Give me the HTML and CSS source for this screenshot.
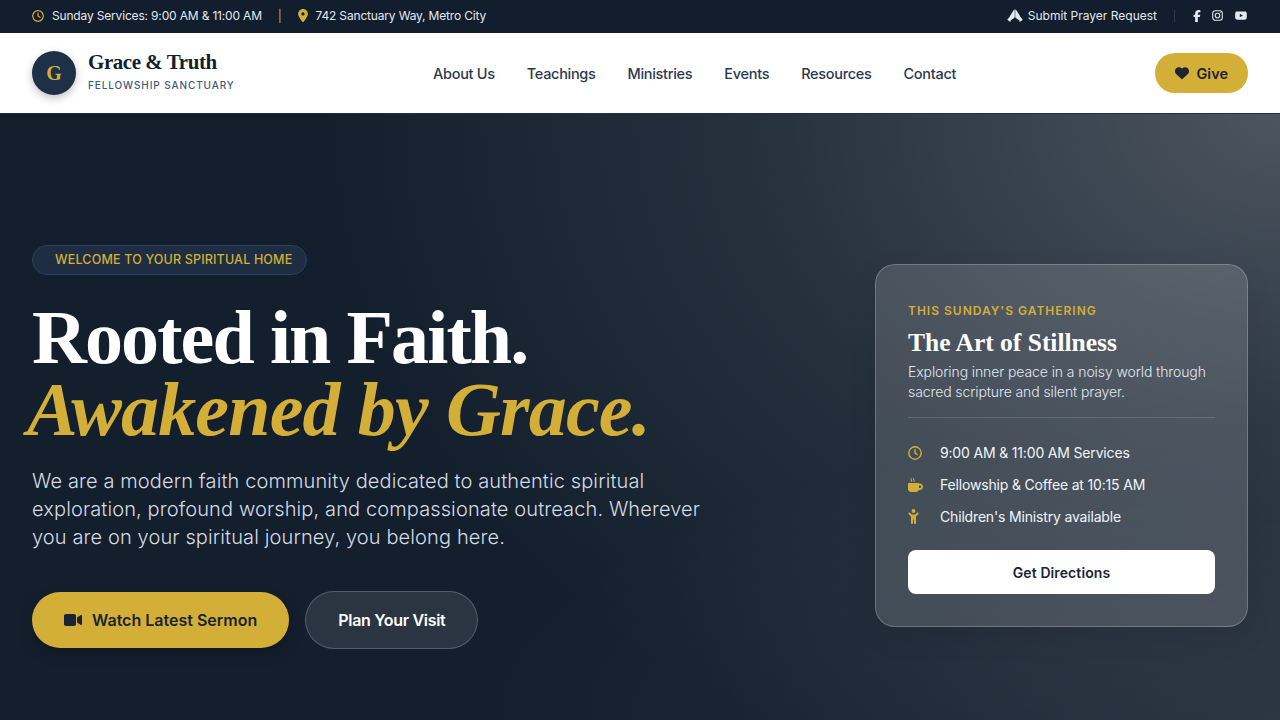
FILE: index.html
```html
<!DOCTYPE html>
<html>
<head>
  <meta charset="UTF-8">
  <title>Grace &amp; Truth Fellowship Sanctuary</title>
  <link rel="stylesheet" href="styles.css">
</head>
<body>
  <div class="topbar">
    <div class="topbar-group">
      <span class="topbar-item">
        <svg class="icon-gold" width="12" height="12" viewBox="0 0 24 24" fill="none" stroke="currentColor" stroke-width="2.4" stroke-linecap="round"><circle cx="12" cy="12" r="10.6"/><path d="M12 6v6l4 2.6"/></svg>
        Sunday Services: 9:00 AM &amp; 11:00 AM
      </span>
      <span class="topbar-sep">|</span>
      <span class="topbar-item">
        <svg class="icon-gold" width="10" height="13" viewBox="0 0 384 512" fill="currentColor"><path d="M215.7 499.2C267 435 384 279.4 384 192C384 86 298 0 192 0S0 86 0 192c0 87.4 117 243 168.3 307.2c12.3 15.3 35.1 15.3 47.4 0zM192 128a64 64 0 1 1 0 128 64 64 0 1 1 0-128z"/></svg>
        742 Sanctuary Way, Metro City
      </span>
    </div>
    <div class="topbar-group topbar-right">
      <a class="topbar-item prayer" href="#">
        <svg width="16" height="13" viewBox="0 0 32 26" fill="currentColor"><path d="M15.5 1c-1 0-2 .8-2.600 2L6.500 13c-.5 1-1.300 2.600-2 3.500L.5 21.500 6.500 26l1-3.500L13 19c1.600-1 2.500-2 2.500-4z"/><path d="M16.500 1c1 0 2 .8 2.600 2l6.400 10c.5 1 1.300 2.600 2 3.500l4 5-6 4.500-1-3.500L19 19c-1.600-1-2.500-2-2.500-4z"/></svg>
        Submit Prayer Request
      </a>
      <span class="topbar-divider"></span>
      <span class="social">
        <svg width="8" height="12" viewBox="0 0 320 512" fill="currentColor"><path d="M80 299.3V512H196V299.3h86.5l18-97.8H196V166.9c0-51.7 20.3-71.5 72.7-71.5c16.3 0 29.4 .4 37 1.2V7.9C291.4 4 256.4 0 236.2 0C129.3 0 80 50.5 80 159.4v42.1H14v97.8H80z"/></svg>
        <svg width="11" height="11" viewBox="0 0 24 24" fill="none" stroke="currentColor" stroke-width="2.3"><rect x="1.5" y="1.5" width="21" height="21" rx="6"/><circle cx="12" cy="12" r="5"/><circle cx="18" cy="6" r="1.2" fill="currentColor" stroke="none"/></svg>
        <svg width="14" height="11" viewBox="0 0 576 512" fill="currentColor"><path d="M549.655 124.083c-6.281-23.65-24.787-42.276-48.284-48.597C458.781 64 288 64 288 64S117.22 64 74.629 75.486c-23.497 6.322-42.003 24.947-48.284 48.597-11.412 42.867-11.412 132.305-11.412 132.305s0 89.438 11.412 132.305c6.281 23.65 24.787 41.5 48.284 47.821C117.22 448 288 448 288 448s170.78 0 213.371-11.486c23.497-6.321 42.003-24.171 48.284-47.821 11.412-42.867 11.412-132.305 11.412-132.305s0-89.438-11.412-132.305zm-317.51 213.508V175.185l142.739 81.205-142.739 81.201z"/></svg>
      </span>
    </div>
  </div>

  <header class="header">
    <a class="brand" href="#">
      <span class="brand-mark">G</span>
      <span class="brand-text">
        <span class="brand-name">Grace &amp; Truth</span>
        <span class="brand-sub">FELLOWSHIP SANCTUARY</span>
      </span>
    </a>
    <nav class="nav">
      <a href="#">About Us</a>
      <a href="#">Teachings</a>
      <a href="#">Ministries</a>
      <a href="#">Events</a>
      <a href="#">Resources</a>
      <a href="#">Contact</a>
    </nav>
    <a class="give-btn" href="#">
      <svg width="14" height="14" viewBox="0 0 512 512" fill="currentColor"><path d="M47.6 300.4L228.3 469.1c7.5 7 17.4 10.9 27.7 10.9s20.2-3.9 27.7-10.9L464.4 300.4c30.4-28.3 47.6-68 47.6-109.5v-5.8c0-69.9-50.5-129.5-119.4-141C347 36.5 300.6 51.4 268 84L256 96 244 84c-32.6-32.6-79-47.5-124.6-39.9C50.5 55.6 0 115.2 0 185.1v5.8c0 41.5 17.2 81.2 47.6 109.5z"/></svg>
      Give
    </a>
  </header>

  <main class="hero">
    <section class="hero-copy">
      <div class="badge">WELCOME TO YOUR SPIRITUAL HOME</div>
      <h1 class="hero-title">Rooted in Faith.<em>Awakened by Grace.</em></h1>
      <p class="hero-text">We are a modern faith community dedicated to authentic spiritual exploration, profound worship, and compassionate outreach. Wherever you are on your spiritual journey, you belong here.</p>
      <div class="hero-actions">
        <a class="btn btn-gold" href="#">
          <svg width="18" height="16" viewBox="0 0 576 512" fill="currentColor"><path d="M0 128C0 92.7 28.7 64 64 64H320c35.3 0 64 28.7 64 64V384c0 35.3-28.7 64-64 64H64c-35.3 0-64-28.7-64-64V128zM559.1 99.8c10.4 5.6 16.9 16.4 16.9 28.2V384c0 11.8-6.5 22.6-16.9 28.2s-23 5-32.9-1.6l-96-64L416 337.1V320 192 174.9l14.2-9.5 96-64c9.8-6.5 22.4-7.2 32.9-1.6z"/></svg>
          Watch Latest Sermon
        </a>
        <a class="btn btn-ghost" href="#">Plan Your Visit</a>
      </div>
    </section>

    <aside class="card">
      <div class="card-label">THIS SUNDAY'S GATHERING</div>
      <h2 class="card-title">The Art of Stillness</h2>
      <p class="card-text">Exploring inner peace in a noisy world through sacred scripture and silent prayer.</p>
      <ul class="card-list">
        <li>
          <span class="card-icon"><svg width="14" height="14" viewBox="0 0 24 24" fill="none" stroke="currentColor" stroke-width="2.4" stroke-linecap="round"><circle cx="12" cy="12" r="10.6"/><path d="M12 6v6l4 2.6"/></svg></span>
          9:00 AM &amp; 11:00 AM Services
        </li>
        <li>
          <span class="card-icon"><svg width="15" height="14" viewBox="0 0 30 28" fill="currentColor"><path fill-rule="evenodd" d="M0 10h22v1h2c3.300 0 6 2.800 6 6.500S27.300 24 24 24h-2.300c-.9 2.400-3 4-5.700 4H6c-3.300 0-6-2.700-6-6V10zm22 5v5h2c1.300 0 2.300-1.100 2.300-2.500S25.300 15 24 15h-2z"/><path d="M6 1l1.500 6M11 1l1.500 6" stroke="currentColor" stroke-width="2" stroke-linecap="round"/></svg></span>
          Fellowship &amp; Coffee at 10:15 AM
        </li>
        <li>
          <span class="card-icon"><svg width="11" height="15" viewBox="0 0 22 30" fill="currentColor"><circle cx="11" cy="4" r="3.8"/><path d="M1.500 7.500c.8-.8 2-.8 2.800 0L7.500 11h7l3.200-3.500c.8-.8 2-.8 2.800 0s.8 2 0 2.800L16 15v13c0 1.100-.9 2-2 2s-2-.9-2-2v-7h-2v7c0 1.100-.9 2-2 2s-2-.9-2-2V15l-4.500-4.700c-.8-.8-.8-2 0-2.800z"/></svg></span>
          Children's Ministry available
        </li>
      </ul>
      <a class="card-btn" href="#">Get Directions</a>
    </aside>
  </main>
</body>
</html>
```

FILE: styles.css
```css
* {
  box-sizing: border-box;
}

body {
  margin: 0;
  font-family: Inter, "Noto Sans", sans-serif;
  color: #1a2433;
  background: #131f2d;
  overflow: hidden;
}

a {
  color: inherit;
  text-decoration: none;
}

/* top bar */
.topbar {
  display: flex;
  align-items: center;
  justify-content: space-between;
  height: 33px;
  padding: 0 32px 2px;
  background: #121e2d;
  color: #e2e8f0;
  font-size: 12px;
  letter-spacing: -0.17px;
}

.topbar-group {
  display: flex;
  align-items: center;
  gap: 16px;
}

.topbar-item {
  display: flex;
  align-items: center;
  gap: 8px;
}

.topbar-sep {
  color: #c4ccd6;
  font-weight: 300;
}

.topbar-right {
  gap: 17px;
}

.prayer {
  gap: 5px;
  letter-spacing: 0;
}

.topbar-divider {
  width: 1px;
  height: 12px;
  background: #2a3a50;
}

.social {
  display: flex;
  align-items: center;
  gap: 11px;
  margin-left: 1px;
}

.icon-gold {
  color: #d4af37;
}

/* header */
.header {
  display: flex;
  align-items: center;
  justify-content: space-between;
  height: 81px;
  padding: 0 32px;
  background: #fff;
  border-bottom: 1px solid #1e3048;
}

.brand {
  display: flex;
  align-items: center;
  gap: 12px;
}

.brand-mark {
  display: flex;
  align-items: center;
  justify-content: center;
  width: 44px;
  height: 44px;
  border-radius: 50%;
  background: #1e3048;
  color: #d4af37;
  font-family: "Liberation Serif", serif;
  font-size: 20px;
  font-weight: 700;
  box-shadow: 0 3px 8px rgba(0,0,0,0.25);
}

.brand-text {
  display: flex;
  flex-direction: column;
  padding-bottom: 5px;
}

.brand-name {
  font-family: "Liberation Serif", serif;
  font-size: 21px;
  line-height: 26px;
  font-weight: 700;
  color: #131f2d;
  letter-spacing: -0.45px;
}

.brand-sub {
  margin-top: 4px;
  font-size: 10px;
  line-height: 13px;
  font-weight: 500;
  color: #3f5a80;
  letter-spacing: 0.9px;
}

.nav {
  display: flex;
  gap: 32px;
  font-size: 14.5px;
  font-weight: 450;
  color: #2a3a50;
  letter-spacing: -0.3px;
}

.give-btn {
  display: flex;
  align-items: center;
  gap: 8px;
  height: 40px;
  padding: 0 20px;
  border-radius: 20px;
  background: #d4af37;
  font-size: 14.5px;
  font-weight: 600;
}

/* hero */
.hero {
  display: flex;
  align-items: center;
  justify-content: space-between;
  height: 606px;
  padding: 60px 32px 0;
  background:
    radial-gradient(ellipse 90% 70% at 100% 100%, rgba(255,255,255,0.08), transparent 70%),
    radial-gradient(ellipse 75% 120% at 100% 0, rgba(255,255,255,0.24), rgba(255,255,255,0.08) 55%, transparent 100%),
    #131f2d;
}

.hero-copy {
  width: 680px;
}

.badge {
  display: flex;
  align-items: center;
  width: 275px;
  height: 30px;
  padding: 0 0 1px 22px;
  border: 1px solid #2d405c;
  border-radius: 15px;
  background: #1e2d42;
  color: #d4af37;
  font-size: 12.5px;
  font-weight: 500;
  letter-spacing: 0.17px;
  white-space: nowrap;
}

.hero-title {
  margin: 26px 0 22px;
  font-family: "Liberation Serif", serif;
  font-size: 76px;
  line-height: 72px;
  font-weight: 700;
  color: #fff;
  letter-spacing: -1.9px;
}

.hero-title em {
  display: block;
  margin-left: -5px;
  color: #d4af37;
  letter-spacing: -0.85px;
}

.hero-text {
  margin: 0 0 40px;
  font-size: 20px;
  line-height: 28px;
  font-weight: 300;
  color: #d5dbe3;
  letter-spacing: 0.12px;
}

.hero-actions {
  display: flex;
  align-items: center;
  gap: 16px;
}

.btn {
  display: flex;
  align-items: center;
  gap: 10px;
  height: 56px;
  padding: 0 32px;
  border-radius: 29px;
  font-size: 16px;
  font-weight: 600;
}

.btn-gold {
  background: #d4af37;
  box-shadow: 0 6px 16px rgba(0,0,0,0.2);
}

.btn-ghost {
  height: 58px;
  border: 1px solid rgba(255,255,255,0.2);
  background: rgba(255,255,255,0.1);
  color: #fff;
  letter-spacing: -0.3px;
}

/* sunday card */
.card {
  width: 373px;
  height: 363px;
  margin-bottom: 4px;
  padding: 32px;
  border: 1px solid rgba(255,255,255,0.22);
  border-radius: 20px;
  background: rgba(255,255,255,0.15);
  color: #fff;
  box-shadow: 0 10px 30px rgba(0,0,0,0.08);
}

.card-label {
  margin-top: 6px;
  font-size: 12px;
  line-height: 16px;
  font-weight: 600;
  color: #d4af37;
  letter-spacing: 1px;
}

.card-title {
  margin: 8px 0 0;
  font-family: "Liberation Serif", serif;
  font-size: 25.5px;
  line-height: 32px;
  font-weight: 700;
}

.card-text {
  margin: 3px 0 0;
  padding-bottom: 15px;
  border-bottom: 1px solid rgba(255,255,255,0.14);
  font-size: 14px;
  line-height: 20px;
  font-weight: 300;
  color: #e2e8f0;
  letter-spacing: -0.1px;
}

.card-list {
  list-style: none;
  margin: 19px 0 0;
  padding: 0;
}

.card-list li {
  display: flex;
  align-items: center;
  height: 32px;
  font-size: 14px;
  color: #f1f5f9;
  letter-spacing: -0.17px;
}

.card-icon {
  display: flex;
  width: 32px;
  color: #d4af37;
}

.card-btn {
  display: flex;
  align-items: center;
  justify-content: center;
  height: 44px;
  margin-top: 17px;
  padding-top: 1px;
  border-radius: 8px;
  background: #fff;
  color: #1a2433;
  font-size: 14px;
  font-weight: 600;
  letter-spacing: 0.1px;
}
```
